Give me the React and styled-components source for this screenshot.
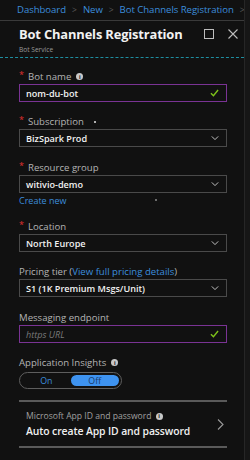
import React from 'react';
import styled, { createGlobalStyle } from 'styled-components';

const Global = createGlobalStyle`
  html, body {
    margin: 0;
    background: #111111;
  }
  * { box-sizing: border-box; }
`;

const Screen = styled.div`
  width: 250px;
  height: 460px;
  display: flex;
  background: #111111;
  font-family: "Open Sans", "Noto Sans", sans-serif;
  overflow: hidden;
`;

const Blade = styled.div`
  width: 245px;
  flex-shrink: 0;
  border-right: 1px solid #262626;
`;

const Gutter = styled.div`
  flex: 1;
  background: #161616;
`;

const Breadcrumb = styled.div`
  height: 21px;
  border-bottom: 1px solid #3a3a3a;
  display: flex;
  align-items: center;
  gap: 6px;
  padding: 0 0 1px 17px;
  font-size: 9.6px;
  white-space: nowrap;
  letter-spacing: -0.05px;
  overflow: hidden;
`;

const Crumb = styled.span`
  color: #3c8ddc;
`;

const Sep = styled.span`
  color: #5a5a5a;
  font-size: 8.5px;
`;

const Header = styled.div`
  height: 37px;
  display: flex;
  align-items: flex-start;
  padding: 5px 6px 0 19px;
  border-bottom: 1px dashed #1e8ea0;
`;

const Titles = styled.div`
  flex: 1;
`;

const Title = styled.div`
  font-size: 12.9px;
  font-weight: 700;
  color: #f2f2f2;
  line-height: 17px;
  letter-spacing: -0.15px;
`;

const Subtitle = styled.div`
  font-size: 6.6px;
  color: #9a9a9a;
  line-height: 9px;
  margin-top: 2px;
`;

const Icons = styled.div`
  display: flex;
  gap: 14px;
  padding-top: 3px;
`;

const Form = styled.div`
  padding: 0 19px;
  display: flex;
  flex-direction: column;
`;

const Label = styled.div`
  display: flex;
  align-items: center;
  gap: 3px;
  font-size: 9.6px;
  color: #b4b4b4;
  height: 13px;
  white-space: nowrap;
  margin-top: ${p => p.top}px;
  margin-bottom: ${p => p.bottom ?? 1}px;
`;

const Star = styled.span`
  color: #e03030;
  font-size: 9px;
  margin-right: 1px;
  position: relative;
  top: -2px;
`;

const Info = styled.span`
  width: 7px;
  height: 7px;
  border-radius: 50%;
  background: #c8c8c8;
  color: #111;
  font-size: 5.5px;
  font-weight: 700;
  display: inline-flex;
  align-items: center;
  justify-content: center;
  margin-left: 2px;
`;

const Dot = styled.span`
  width: 2px;
  height: 2px;
  border-radius: 50%;
  background: ${p => p.color || '#e6e6e6'};
  margin-left: ${p => p.left}px;
`;

const Field = styled.div`
  height: ${p => p.h || 18}px;
  width: 208px;
  flex-shrink: 0;
  border: 1px solid ${p => (p.active ? '#7a3394' : '#4a4a4a')};
  display: flex;
  align-items: center;
  justify-content: space-between;
  padding: 0 7px 0 6px;
  font-size: 9.1px;
  font-weight: 600;
  color: #f2f2f2;
  ${p => p.placeholder && 'color: #7a7a7a; font-weight: 400; font-style: italic;'}
`;

const Link = styled.span`
  color: #3c8ddc;
`;

const CreateNewRow = styled.div`
  display: flex;
  align-items: center;
  margin-top: 1px;
  height: 12px;
  font-size: 9px;
  color: #3c8ddc;
`;

const Toggle = styled.div`
  width: 103px;
  height: 17px;
  margin-top: 2px;
  border: 1px solid #5e5e5e;
  border-radius: 9px;
  display: flex;
  padding: 2px;
`;

const ToggleOption = styled.div`
  flex: 1;
  border-radius: 7px;
  display: flex;
  align-items: center;
  justify-content: center;
  font-size: 8.8px;
  background: ${p => (p.on ? '#3e93f0' : 'transparent')};
  color: ${p => (p.on ? '#1a3a6a' : '#3c8ddc')};
`;

const AppRow = styled.div`
  margin-top: 11px;
  width: 208px;
  height: 48px;
  border-top: 2px solid #5a5a5a;
  border-bottom: 2px solid #5a5a5a;
  display: flex;
  align-items: center;
  justify-content: space-between;
  padding: 0 3px 0 7px;
`;

const AppText = styled.div`
  display: flex;
  flex-direction: column;
  gap: 2px;
`;

const AppLabel = styled.div`
  font-size: 8.6px;
  color: #a0a0a0;
  display: flex;
  align-items: center;
  gap: 2px;
  white-space: nowrap;
`;

const AppValue = styled.div`
  font-size: 10.4px;
  font-weight: 600;
  color: #f0f0f0;
  white-space: nowrap;
  letter-spacing: -0.1px;
`;

const Chevron = () => (
  <svg width="7" height="11" viewBox="0 0 7 11">
    <path d="M1 0.5 L6 5.5 L1 10.5" stroke="#9a9a9a" strokeWidth="1.1" fill="none" />
  </svg>
);

const Check = () => (
  <svg width="9" height="8" viewBox="0 0 10 9">
    <path d="M1 4.8 L3.8 7.5 L9 1.2" stroke="#7ec21a" strokeWidth="1.6" fill="none" />
  </svg>
);

const Square = () => (
  <svg width="10" height="10" viewBox="0 0 10 10">
    <rect x="0.5" y="0.5" width="9" height="9" stroke="#bdbdbd" strokeWidth="1" fill="none" />
  </svg>
);

const Close = () => (
  <svg width="10" height="10" viewBox="0 0 10 10">
    <path d="M0.5 0.5 L9.5 9.5 M9.5 0.5 L0.5 9.5" stroke="#bdbdbd" strokeWidth="1.1" fill="none" />
  </svg>
);

const Down = () => (
  <svg width="8" height="6" viewBox="0 0 10 6">
    <path d="M1 1 L5 5 L9 1" stroke="#c8c8c8" strokeWidth="1.2" fill="none" />
  </svg>
);

const Select = ({ children }) => (
  <Field>
    <span>{children}</span>
    <Down />
  </Field>
);

export default function App() {
  return (
    <Screen>
      <Global />
      <Blade>
        <Breadcrumb>
          <Crumb>Dashboard</Crumb>
          <Sep>&gt;</Sep>
          <Crumb>New</Crumb>
          <Sep>&gt;</Sep>
          <Crumb>Bot Channels Registration</Crumb>
          <Sep>&gt;</Sep>
        </Breadcrumb>
        <Header>
          <Titles>
            <Title>Bot Channels Registration</Title>
            <Subtitle>Bot Service</Subtitle>
          </Titles>
          <Icons>
            <Square />
            <Close />
          </Icons>
        </Header>
        <Form>
          <Label top={12}><Star>*</Star>Bot name<Info>i</Info></Label>
          <Field active>
            <span>nom-du-bot</span>
            <Check />
          </Field>
          <Label top={13}><Star>*</Star>Subscription<Dot left={7} /></Label>
          <Select>BizSpark Prod</Select>
          <Label top={14}><Star>*</Star>Resource group</Label>
          <Select>witivio-demo</Select>
          <CreateNewRow>
            Create new
            <Dot left={88} color="#8a8a8a" />
          </CreateNewRow>
          <Label top={14}><Star>*</Star>Location</Label>
          <Select>North Europe</Select>
          <Label top={13}>
            <span>Pricing tier (<Link>View full pricing details</Link>)</span>
          </Label>
          <Select>S1 (1K Premium Msgs/Unit)</Select>
          <Label top={14}>Messaging endpoint</Label>
          <Field active placeholder>
            <span>https URL</span>
            <Check />
          </Field>
          <Label top={13}>Application Insights<Info>i</Info></Label>
          <Toggle>
            <ToggleOption>On</ToggleOption>
            <ToggleOption on>Off</ToggleOption>
          </Toggle>
          <AppRow>
            <AppText>
              <AppLabel>Microsoft App ID and password<Info>i</Info></AppLabel>
              <AppValue>Auto create App ID and password</AppValue>
            </AppText>
            <Chevron />
          </AppRow>
        </Form>
      </Blade>
      <Gutter />
    </Screen>
  );
}
